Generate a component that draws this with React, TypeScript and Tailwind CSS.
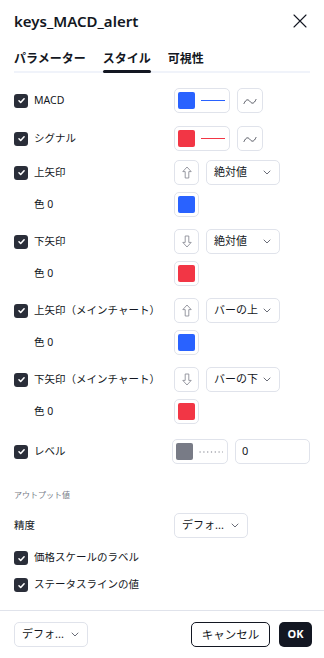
import React from 'react';

const FONT = { fontFamily: '"Noto Sans", "Noto Sans CJK JP", sans-serif' };

function CheckBox() {
  return (
    <span className="w-[14px] h-[14px] shrink-0 rounded-[3px] bg-[#2a2e39] flex items-center justify-center">
      <svg width="9" height="9" viewBox="0 0 10 10">
        <path d="M2.2 5.3l1.9 1.9 3.8-4.2" stroke="white" strokeWidth="1.7" fill="none" strokeLinecap="round" strokeLinejoin="round" />
      </svg>
    </span>
  );
}

function Chevron() {
  return (
    <svg width="8" height="5" viewBox="0 0 8 5" className="shrink-0">
      <path d="M1 1l3 3 3-3" stroke="#6a6d78" strokeWidth="1" fill="none" strokeLinecap="round" strokeLinejoin="round" />
    </svg>
  );
}

function Arrow({ down }: { down?: boolean }) {
  return (
    <svg width="10" height="13" viewBox="0 0 10 13" className={down ? 'rotate-180' : ''}>
      <path d="M5 1L9.2 5.6H6.8V12H3.2V5.6H0.8Z" stroke="#8d8f98" strokeWidth="0.9" fill="none" strokeLinejoin="round" />
    </svg>
  );
}

function Swatch({ color }: { color: string }) {
  return <span className="w-[17px] h-[17px] rounded-[2px] shrink-0" style={{ backgroundColor: color }} />;
}

function ColorLine({ color, dotted }: { color: string; dotted?: boolean }) {
  return (
    <button className="w-[56px] h-[25px] rounded-[5px] border border-[#e0e3eb] flex items-center pl-[3px] gap-[6px]">
      <Swatch color={color} />
      {dotted ? (
        <svg width="24" height="2" viewBox="0 0 24 2">
          <path d="M0.5 1H24" stroke="#787b86" strokeWidth="1.2" strokeDasharray="1.2 2.6" />
        </svg>
      ) : (
        <span className="w-[24px] h-px" style={{ backgroundColor: color }} />
      )}
    </button>
  );
}

function ColorOnly({ color }: { color: string }) {
  return (
    <button className="w-[25px] h-[25px] rounded-[5px] border border-[#e0e3eb] flex items-center justify-center">
      <Swatch color={color} />
    </button>
  );
}

function LineStyle() {
  return (
    <button className="w-[26px] h-[25px] rounded-[5px] border border-[#e0e3eb] flex items-center justify-center">
      <svg width="14" height="8" viewBox="0 0 14 8">
        <path d="M1 6.5C3 2 5 2 7 4.5S11 7 13 2.5" stroke="#50535e" strokeWidth="1" fill="none" strokeLinecap="round" />
      </svg>
    </button>
  );
}

function ArrowBtn({ down }: { down?: boolean }) {
  return (
    <button className="w-[25px] h-[25px] rounded-[5px] border border-[#e0e3eb] flex items-center justify-center">
      <Arrow down={down} />
    </button>
  );
}

function Select({ label, w }: { label: string; w: string }) {
  return (
    <button className={`${w} h-[25px] rounded-[5px] border border-[#e0e3eb] flex items-center justify-between pl-[7px] pr-[8px] text-[11px] text-[#131722]`}>
      <span>{label}</span>
      <Chevron />
    </button>
  );
}

function Row({ label, check = true, mt, children }: { label: string; check?: boolean; mt: string; children?: React.ReactNode }) {
  return (
    <div className={`${mt} flex items-center h-[25px]`}>
      <div className="w-[160px] flex items-center gap-[6px] text-[10.5px] text-[#131722]">
        {check ? <CheckBox /> : <span className="w-[14px]" />}
        <span>{label}</span>
      </div>
      <div className="flex items-center gap-[7px]">{children}</div>
    </div>
  );
}

export default function App() {
  const blue = '#2962ff';
  const red = '#f23645';
  return (
    <div className="w-[324px] h-[658px] bg-white flex flex-col text-[#131722]" style={FONT}>
      {/* Header */}
      <div className="flex items-center justify-between px-[14px] pt-[10px] h-[32px]">
        <span className="text-[15px] font-semibold leading-[22px]">keys_MACD_alert</span>
        <svg width="14" height="14" viewBox="0 0 14 14" className="mr-[3px]">
          <path d="M1 1l12 12M13 1L1 13" stroke="#131722" strokeWidth="1.1" strokeLinecap="round" />
        </svg>
      </div>

      {/* Tabs */}
      <div className="mx-[14px] mt-[18px] border-b-2 border-[#f0f3fa] flex gap-[17px] text-[12px] font-bold">
        <span className="pb-[3px]">パラメーター</span>
        <span className="relative pb-[3px]">
          スタイル
          <span className="absolute left-0 right-0 -bottom-[2px] h-[3px] rounded-[2px] bg-[#131722]" />
        </span>
        <span className="pb-[3px]">可視性</span>
      </div>

      {/* Body */}
      <div className="px-[14px] flex flex-col">
        <Row label="MACD" mt="mt-[15px]">
          <ColorLine color={blue} />
          <LineStyle />
        </Row>
        <Row label="シグナル" mt="mt-[13px]">
          <ColorLine color={red} />
          <LineStyle />
        </Row>
        <Row label="上矢印" mt="mt-[9px]">
          <ArrowBtn />
          <Select label="絶対値" w="w-[74px]" />
        </Row>
        <Row label="色 0" check={false} mt="mt-[7px]">
          <ColorOnly color={blue} />
        </Row>
        <Row label="下矢印" mt="mt-[12px]">
          <ArrowBtn down />
          <Select label="絶対値" w="w-[74px]" />
        </Row>
        <Row label="色 0" check={false} mt="mt-[7px]">
          <ColorOnly color={red} />
        </Row>
        <Row label="上矢印（メインチャート）" mt="mt-[12px]">
          <ArrowBtn />
          <Select label="バーの上" w="w-[74px]" />
        </Row>
        <Row label="色 0" check={false} mt="mt-[7px]">
          <ColorOnly color={blue} />
        </Row>
        <Row label="下矢印（メインチャート）" mt="mt-[12px]">
          <ArrowBtn down />
          <Select label="バーの下" w="w-[74px]" />
        </Row>
        <Row label="色 0" check={false} mt="mt-[7px]">
          <ColorOnly color={red} />
        </Row>
        <Row label="レベル" mt="mt-[15px]">
          <ColorLine color="#787b86" dotted />
          <div className="w-[75px] h-[25px] rounded-[5px] border border-[#e0e3eb] flex items-center pl-[6px] text-[11px]">0</div>
        </Row>

        <div className="mt-[26px] text-[8px] text-[#787b86] leading-[10px]">アウトプット値</div>

        <div className="mt-[13px] flex items-center h-[25px]">
          <span className="w-[160px] text-[10.5px]">精度</span>
          <Select label="デフォ..." w="w-[74px]" />
        </div>

        <div className="mt-[11px] flex items-center gap-[6px] h-[18px] text-[10.5px]">
          <CheckBox />
          <span>価格スケールのラベル</span>
        </div>
        <div className="mt-[9px] flex items-center gap-[6px] h-[18px] text-[10.5px]">
          <CheckBox />
          <span>ステータスラインの値</span>
        </div>
      </div>

      {/* Footer */}
      <div className="mt-auto border-t border-[#e0e3eb] h-[48px] px-[12px] flex items-center justify-between">
        <div className="ml-[2px]">
          <Select label="デフォ..." w="w-[74px]" />
        </div>
        <div className="flex items-center gap-[9px]">
          <button className="w-[79px] h-[25px] rounded-[5px] border border-[#131722] text-[11.5px]">キャンセル</button>
          <button className="w-[33px] h-[25px] rounded-[5px] bg-[#131722] text-white text-[11px] font-bold">OK</button>
        </div>
      </div>
    </div>
  );
}
